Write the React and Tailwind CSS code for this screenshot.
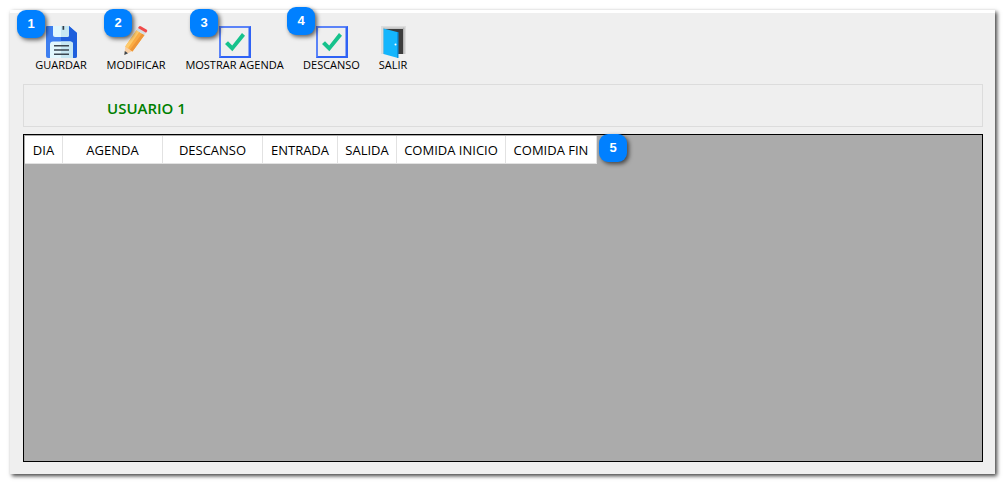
import React from "react";

function Marcador({ numero, className }) {
    return (
        <span
            className={`absolute z-10 flex size-7 items-center justify-center rounded-[9px] bg-[#0080ff] font-['Liberation_Sans',Arial,sans-serif] text-[13px] leading-4 font-bold text-white shadow-[2px_2px_4px_rgba(0,0,0,0.6)] ${className}`}
        >
            {numero}
        </span>
    );
}

function IconoGuardar() {
    return (
        <svg viewBox="0 0 32 32" className="size-8 shrink-0" aria-hidden="true">
            <path d="M2 0h22l8 7v23a2 2 0 0 1-2 2H3a2 2 0 0 1-2-2V1a1 1 0 0 1 1-1z" fill="#3d7ef0" />
            <path d="M16 0h8l8 7v23a2 2 0 0 1-2 2H16z" fill="#1f5fdc" />
            <path d="M8 0h16v9a2 2 0 0 1-2 2H10a2 2 0 0 1-2-2z" fill="#e2f7fd" />
            <path d="M16 0h8v9a2 2 0 0 1-2 2h-6z" fill="#c6e7f3" />
            <path d="M17.500 0h1.700v3.800h-1.700z" fill="#333b45" />
            <path d="M5 32V18.500a3 3 0 0 1 3-3h17a3 3 0 0 1 3 3V32z" fill="#e2f7fd" />
            <path d="M16 15.500h9a3 3 0 0 1 3 3V32H16z" fill="#c6e7f3" />
            <path d="M9 19h15v1.600H9zM9 23.200h15v1.600H9zM9 27.400h15V29H9z" fill="#3b4650" />
        </svg>
    );
}

function IconoModificar() {
    return (
        <svg viewBox="0 0 32 32" className="size-8 shrink-0" aria-hidden="true">
            <path d="M5.300 20.500l7.200 4.500L4.300 29z" fill="#f8cfa4" />
            <path d="M4.800 25l3.200 2.200-3.700 1.800z" fill="#3b4650" />
            <path d="M5.300 20.500L16.500 4.300l8 4.700L12.500 25.500z" fill="#fbac44" />
            <path d="M5.300 20.500L16.500 4.300l2.700 1.600L8 22.200z" fill="#ffcb6b" />
            <path d="M10 23.800L22 7.500 24.500 9 12.500 25.500z" fill="#ee9638" />
            <path d="M16.500 4.300L18 2l8 4.800L24.500 9z" fill="#d3dde1" />
            <path d="M18 2l.8-1.200a1.500 1.500 0 0 1 2-.5l5.600 3.200a1.500 1.500 0 0 1 .6 2L26 6.800z" fill="#f04a4a" />
        </svg>
    );
}

function IconoCasilla() {
    return (
        <svg viewBox="0 0 32 32" className="size-8 shrink-0" aria-hidden="true">
            <path d="M0 0h32v32H0z" fill="#2f62f5" />
            <path d="M0 0h32l-3 2H2v28l-2 2z" fill="#5b83f8" />
            <path d="M2 2h27.500v28H2z" fill="#efefef" />
            <path d="M6 18l3-2.800 4.200 4.300L23 7l3 2.700L13.300 25.300z" fill="#16c28c" />
        </svg>
    );
}

function IconoSalir() {
    return (
        <svg viewBox="0 0 32 32" className="size-8 shrink-0" aria-hidden="true">
            <path d="M4 0h25v28H4z" fill="#dcdcdc" />
            <path d="M26 1.500h1.500V28H26z" fill="#b4b4b4" />
            <path d="M6 1.500h20V28H6z" fill="#c4c4c4" />
            <path d="M8 3h18v25H8z" fill="#3c3c3c" />
            <path d="M6.500 2.500L21 6.200V32L6.500 28z" fill="#14b6fd" />
            <path d="M20 5.900l1.500.4V32L20 31.700z" fill="#0991e0" />
            <circle cx="18.500" cy="18.500" r="1" fill="#fff" />
        </svg>
    );
}

const botones = [
    { texto: "GUARDAR", Icono: IconoGuardar, ancho: "w-[52px]", numero: 1, pos: "-left-[18px] -top-4" },
    { texto: "MODIFICAR", Icono: IconoModificar, ancho: "w-[60px]", numero: 2, pos: "-left-0.5 -top-[17px]" },
    { texto: "MOSTRAR AGENDA", Icono: IconoCasilla, ancho: "w-[99px]", numero: 3, pos: "left-[5px] -top-[17px]" },
    { texto: "DESCANSO", Icono: IconoCasilla, ancho: "w-[57px]", numero: 4, pos: "-left-4 -top-[19px]" },
    { texto: "SALIR", Icono: IconoSalir, ancho: "w-7" },
];

const columnas = [
    { titulo: "DIA", ancho: "w-[38px]" },
    { titulo: "AGENDA", ancho: "w-[100px]" },
    { titulo: "DESCANSO", ancho: "w-[100px]" },
    { titulo: "ENTRADA", ancho: "w-[75px]" },
    { titulo: "SALIDA", ancho: "w-[59px]" },
    { titulo: "COMIDA INICIO", ancho: "w-[109px]" },
    { titulo: "COMIDA FIN", ancho: "w-[91px]" },
];

function App() {
    return (
        <div className="flex min-h-screen bg-white pt-2.5 pr-[9px] pb-[9px] pl-2.5 font-['Open_Sans','Noto_Sans',sans-serif] text-black">
            <main className="flex flex-1 flex-col border-t-3 border-white bg-[#efefef] pt-[13px] pr-3 pb-3 pl-[13px] shadow-[2px_2px_4px_rgba(0,0,0,0.75)]">
                <div className="flex gap-[19px] pl-3">
                    {botones.map(({ texto, Icono, ancho, numero, pos }) => (
                        <button
                            key={texto}
                            type="button"
                            className={`relative flex flex-col items-center text-[11px] leading-[14px] whitespace-nowrap ${ancho}`}
                        >
                            <Icono />
                            {texto}
                            {numero && <Marcador numero={numero} className={pos} />}
                        </button>
                    ))}
                </div>

                {/* Usuario seleccionado */}
                <div className="mt-3 border border-[#dcdcdc] pt-3 pb-[7px] pl-[83px]">
                    <h1 className="text-[15px] leading-[22px] font-semibold text-[#008000]">USUARIO 1</h1>
                </div>

                {/* Horario por dia */}
                <div className="mt-[7px] flex-1 border border-black bg-[#ababab] pt-px pl-px">
                    <div className="relative w-fit">
                        <table className="table-fixed border-separate border-spacing-0">
                            <thead>
                                <tr>
                                    {columnas.map((col) => (
                                        <th
                                            key={col.titulo}
                                            scope="col"
                                            className={`h-7 border-r border-b border-[#e2e2e2] bg-white p-0 text-center text-[13px] leading-5 font-normal whitespace-nowrap ${col.ancho}`}
                                        >
                                            {col.titulo}
                                        </th>
                                    ))}
                                </tr>
                            </thead>
                        </table>
                        <Marcador numero={5} className="left-full -top-0.5 ml-0.5" />
                    </div>
                </div>
            </main>
        </div>
    );
}

export default App;
